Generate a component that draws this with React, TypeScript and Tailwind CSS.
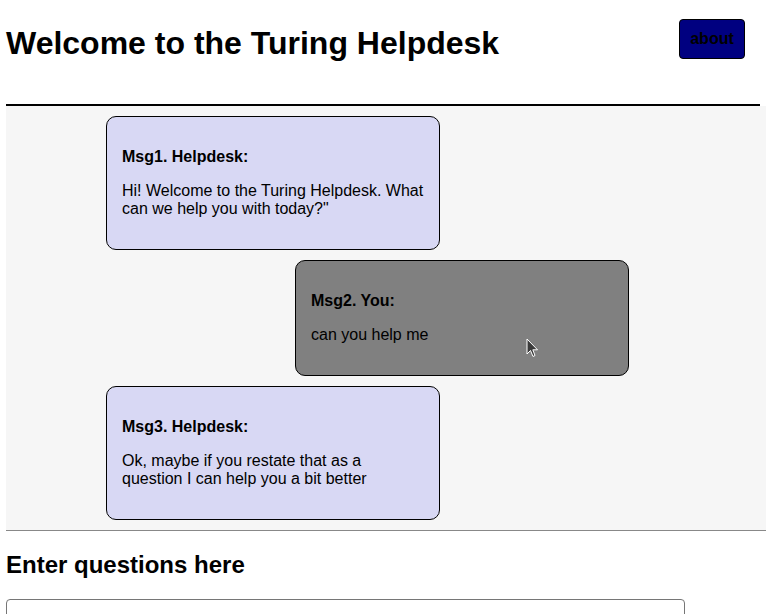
import React from "react";

const Msg = ({ title, body, you }: { title: string; body: string; you?: boolean }) => (
  <div
    className={`w-[334px] rounded-[10px] border border-black px-[15px] py-[15px] ${
      you ? "ml-[289px] bg-[#808080]" : "ml-[100px] bg-[#d8d8f4]"
    }`}
  >
    <p className="my-4 text-[16px] leading-[18px] font-bold">{title}</p>
    <p className="my-4 text-[16px] leading-[18px]">{body}</p>
  </div>
);

export default function App() {
  return (
    <div className="relative min-h-[614px] overflow-hidden bg-white pl-[6px] text-black" style={{ fontFamily: '"Liberation Sans", Arial, sans-serif' }}>
      <div className="flex items-start justify-between pr-[21px]">
        <h1 className="mt-[25px] text-[32px] leading-[36px] font-bold">Welcome to the Turing Helpdesk</h1>
        <button className="mt-[19px] h-[40px] w-[66px] rounded-[4px] border border-black bg-[#000080] text-[16px] font-bold text-black">
          about
        </button>
      </div>
      <div className="mt-[43px] mr-[6px] h-[2px] bg-black" />
      <div className="flex flex-col gap-[10px] border-b border-[#888888] bg-[#f6f6f6] py-[10px]">
        <Msg title="Msg1. Helpdesk:" body={'Hi! Welcome to the Turing Helpdesk. What can we help you with today?"'} />
        <Msg you title="Msg2. You:" body="can you help me" />
        <Msg title="Msg3. Helpdesk:" body="Ok, maybe if you restate that as a question I can help you a bit better" />
      </div>
      <h2 className="mt-[20px] text-[24px] leading-[28px] font-bold">Enter questions here</h2>
      <input className="mt-[20px] block h-[30px] w-[679px] rounded-[4px] border border-[#767676] bg-white" />
      <svg className="absolute left-[526px] top-[338px]" width="14" height="22" viewBox="0 0 14 22">
        <path d="M1 1 L1 16 L4.5 12.5 L7 18.5 L9 17.5 L6.8 11.8 L11.5 11.8 Z" fill="#3a3a3a" stroke="#ffffff" strokeWidth="1" strokeLinejoin="round" />
      </svg>
    </div>
  );
}
